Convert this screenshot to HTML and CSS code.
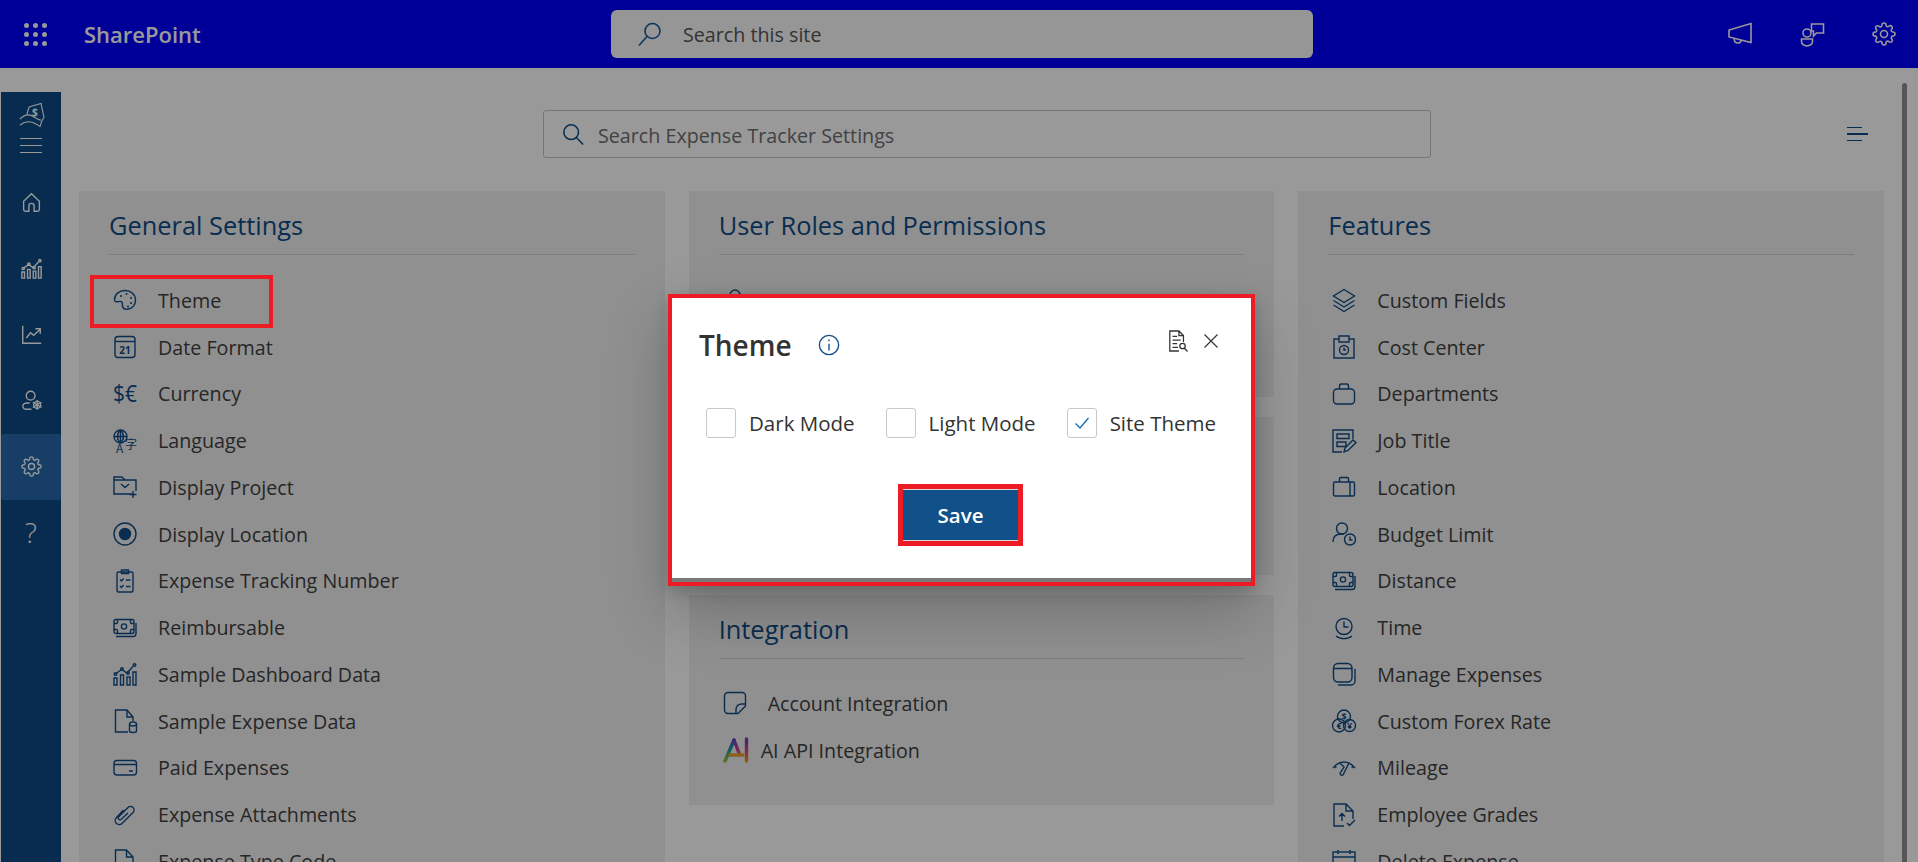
FILE: index.html
```html
<!DOCTYPE html>
<html lang="en">
<head>
    <meta charset="UTF-8">
    <meta name="viewport" content="width=device-width, initial-scale=1.0">
    <title>Expense Tracker Settings</title>
    <link rel="stylesheet" href="styles.css">
</head>
<body>
    <svg class="sprite" width="0" height="0">
        <symbol id="i-money" viewBox="0 0 24 24">
            <rect x="1" y="3.500" width="20" height="14" rx="2"/>
            <circle cx="11" cy="10.500" r="2.600"/>
            <path d="M1 7.500h2.500a1 1 0 0 0 1-1V3.500M21 7.500h-2.500a1 1 0 0 1-1-1V3.500M1 13.500h2.500a1 1 0 0 1 1 1v3M21 13.500h-2.500a1 1 0 0 0-1 1v3M3 20.500h17a3 3 0 0 0 3-3V7"/>
        </symbol>
        <symbol id="i-bars" viewBox="0 0 24 24">
            <path d="M1 16h3v7H1zM7.500 13h3v10h-3zM14 15h3v8h-3zM20 10h3v13h-3z"/>
            <path d="M3 11.500l5.500-4 5.500 3.500 6-6.500"/>
            <circle cx="2.500" cy="12" r="1.300"/><circle cx="9" cy="7" r="1.300"/><circle cx="15" cy="11" r="1.300"/><circle cx="21.500" cy="3" r="1.300"/>
        </symbol>
        <symbol id="i-gear" viewBox="0 0 24 24">
            <circle cx="12" cy="12" r="3.500"/>
            <path d="M19.400 15a1.650 1.650 0 0 0 .33 1.820l.06.06a2 2 0 0 1 0 2.830 2 2 0 0 1-2.830 0l-.06-.06a1.650 1.650 0 0 0-1.820-.33 1.650 1.650 0 0 0-1 1.510V21a2 2 0 0 1-2 2 2 2 0 0 1-2-2v-.09A1.650 1.650 0 0 0 9 19.400a1.650 1.650 0 0 0-1.820.33l-.06.06a2 2 0 0 1-2.830 0 2 2 0 0 1 0-2.830l.06-.06a1.650 1.650 0 0 0 .33-1.820 1.650 1.650 0 0 0-1.510-1H3a2 2 0 0 1-2-2 2 2 0 0 1 2-2h.09A1.650 1.650 0 0 0 4.600 9a1.650 1.650 0 0 0-.33-1.820l-.06-.06a2 2 0 0 1 0-2.830 2 2 0 0 1 2.830 0l.06.06a1.650 1.650 0 0 0 1.820.33H9a1.650 1.650 0 0 0 1-1.510V3a2 2 0 0 1 2-2 2 2 0 0 1 2 2v.09a1.650 1.650 0 0 0 1 1.510 1.650 1.650 0 0 0 1.820-.33l.06-.06a2 2 0 0 1 2.830 0 2 2 0 0 1 0 2.830l-.06.06a1.650 1.650 0 0 0-.33 1.820V9a1.650 1.650 0 0 0 1.510 1H21a2 2 0 0 1 2 2 2 2 0 0 1-2 2h-.09a1.650 1.650 0 0 0-1.510 1z"/>
        </symbol>
        <symbol id="i-doc" viewBox="0 0 24 24">
            <path d="M13 23H2.500V1H13.500L20 8v5M13.500 1v7H20"/>
        </symbol>
    </svg>

    <header class="topbar">
        <div class="waffle"><i></i><i></i><i></i><i></i><i></i><i></i><i></i><i></i><i></i></div>
        <span class="brand">SharePoint</span>
        <div class="site-search">
            <svg class="site-search-ico" viewBox="0 0 24 24"><circle cx="14.500" cy="9" r="7.500"/><path d="M9 14.500L1 23.500"/></svg>
            <span>Search this site</span>
        </div>
        <div class="top-actions">
            <svg viewBox="0 0 24 24"><path d="M23 1.500v19L1 15V8zM6 16.500c.2 3 2 4.500 3.800 4.500 1.700 0 3-1 3.400-2.500"/></svg>
            <svg viewBox="0 0 24 24"><circle cx="7" cy="11" r="4"/><path d="M11.500 2h12v9h-7l-3 3v-5h-2zM1.500 17h11v2.500a5.500 4.500 0 0 1-11 0z"/></svg>
            <svg viewBox="0 0 24 24"><use href="#i-gear"/></svg>
        </div>
    </header>

    <div class="main">
        <nav class="sidebar">
            <div class="side-top">
                <svg class="side-logo" viewBox="0 0 26 24">
                    <path d="M10 4l12-3.500 3 14-2 3M10 4L8 11M1 16c5-5 10-5 14-2 3 2 5 3 7 3M1 22c5-4 11-4 16-1 2 1 3 2 4 2.500l2-6"/>
                    <text x="13" y="13" class="logo-dollar">$</text>
                </svg>
                <div class="burger"><i></i><i></i><i></i></div>
            </div>
            <a class="side-item"><svg viewBox="0 0 24 24"><path d="M3 10.500L12 2l9 8.500V20a2 2 0 0 1-2 2h-4v-6a3 3 0 0 0-6 0v6H5a2 2 0 0 1-2-2z"/></svg></a>
            <a class="side-item"><svg viewBox="0 0 24 24"><use href="#i-bars"/></svg></a>
            <a class="side-item"><svg viewBox="0 0 24 24"><path d="M2 2v20h21M6 16l5-6 3.500 3L22 6M16.500 5.500H22V11"/></svg></a>
            <a class="side-item"><svg viewBox="0 0 24 24"><circle cx="11" cy="6.500" r="5"/><path d="M12 22H5.500a3.500 3.500 0 0 1-2-6.300c1-.7 2-.9 3.500-.9h3"/><circle class="fill" cx="18.500" cy="17" r="4"/><path d="M18.500 11.500v11M13.500 14l10 6M23.500 14l-10 6"/></svg></a>
            <a class="side-item active"><svg viewBox="0 0 24 24"><use href="#i-gear"/></svg></a>
            <a class="side-item help">?</a>
        </nav>

        <div class="content">
            <div class="search-row">
                <div class="settings-search">
                    <svg viewBox="0 0 24 24"><circle cx="10" cy="10" r="8"/><path d="M16 16l7 7.500"/></svg>
                    <span>Search Expense Tracker Settings</span>
                </div>
                <div class="filter-btn"><i></i><i></i><i></i></div>
            </div>

            <div class="cards">
                <section class="card">
                    <h2>General Settings</h2>
                    <ul class="list">
                        <li class="marked">
                            <svg class="ico" viewBox="0 0 24 24"><path d="M12 2.500C6 2.500 1.500 6.500 1.500 11.500c0 2 1.200 2.600 3 2.200 2-.4 3.800-.6 4.500.6.700 1.200.1 2.600.5 4 .5 1.700 2.300 3.300 4.800 3 5-.5 8.200-4.300 8.200-9.300 0-5.600-4.600-9.500-10.500-9.500z"/><circle class="fill" cx="8" cy="8" r="1"/><circle class="fill" cx="13.500" cy="6" r="1"/><circle class="fill" cx="18" cy="10" r="1"/><circle class="fill" cx="18" cy="15" r="1"/><circle class="fill" cx="15" cy="18.500" r="1"/></svg>
                            <span>Theme</span><b class="mark"></b>
                        </li>
                        <li>
                            <svg class="ico" viewBox="0 0 24 24"><rect x="2" y="1.500" width="20" height="21" rx="3"/><path d="M2 6.500h20"/><text x="12" y="18.500" class="ico-num">21</text></svg>
                            <span>Date Format</span>
                        </li>
                        <li>
                            <svg class="ico" viewBox="0 0 24 24"><text x="0" y="20" class="ico-cur" textLength="24" lengthAdjust="spacingAndGlyphs">$€</text></svg>
                            <span>Currency</span>
                        </li>
                        <li>
                            <svg class="ico" viewBox="0 0 24 24"><circle cx="7.500" cy="7.500" r="6.500"/><path d="M1 7.500h13M7.500 1v13M7.500 1c-4 3.500-4 9.500 0 13M7.500 1c4 3.500 4 9.500 0 13"/><text x="3" y="24" class="ico-lang">A</text><text x="12" y="20" class="ico-lang">字</text></svg>
                            <span>Language</span>
                        </li>
                        <li>
                            <svg class="ico" viewBox="0 0 24 24"><path d="M19 19H1V2h8l3 3h11v11M1 5h11M8 9l4 3.500L16 9M20 16v7M16.500 19.500h7"/></svg>
                            <span>Display Project</span>
                        </li>
                        <li>
                            <svg class="ico" viewBox="0 0 24 24"><circle cx="12" cy="12" r="11"/><circle class="solid" cx="12" cy="12" r="5.500"/></svg>
                            <span>Display Location</span>
                        </li>
                        <li>
                            <svg class="ico" viewBox="0 0 24 24"><rect x="4" y="3" width="16" height="20" rx="1.500"/><path d="M8.500 1h7v3.500h-7zM7 10.500l1.500 1.500 2-2.500M13 11h4.500M7 17l1.500 1.500 2-2.500M13 17.500h4.500"/></svg>
                            <span>Expense Tracking Number</span>
                        </li>
                        <li>
                            <svg class="ico"><use href="#i-money"/></svg>
                            <span>Reimbursable</span>
                        </li>
                        <li>
                            <svg class="ico"><use href="#i-bars"/></svg>
                            <span>Sample Dashboard Data</span>
                        </li>
                        <li>
                            <svg class="ico" viewBox="0 0 24 24"><path d="M15 23H2.500V1H14l6 7v4M14 1v7h6"/><ellipse cx="20" cy="15" rx="3.500" ry="2"/><path d="M16.500 15v7a3.500 1.500 0 0 0 7 0v-7"/></svg>
                            <span>Sample Expense Data</span>
                        </li>
                        <li>
                            <svg class="ico" viewBox="0 0 24 24"><rect x="1" y="4.500" width="22.500" height="14.500" rx="3"/><path d="M1 8.500h22.500M16 15h4"/></svg>
                            <span>Paid Expenses</span>
                        </li>
                        <li>
                            <svg class="ico" viewBox="0 0 24 24"><path d="M10.500 7l-7 7.500a4 4 0 0 0 5.500 6L20 9.500a3.500 3.500 0 0 0-5-5L5.500 14a1.800 1.800 0 0 0 2.500 2.500L15 10"/></svg>
                            <span>Expense Attachments</span>
                        </li>
                        <li>
                            <svg class="ico"><use href="#i-doc"/></svg>
                            <span>Expense Type Code</span>
                        </li>
                    </ul>
                </section>

                <div class="stack">
                    <section class="card roles">
                        <h2>User Roles and Permissions</h2>
                        <ul class="list">
                            <li>
                                <svg class="ico" viewBox="0 0 24 24"><circle cx="12" cy="7" r="5"/><path d="M3 22c0-5 4-8 9-8s9 3 9 8"/></svg>
                            </li>
                        </ul>
                    </section>
                    <section class="card hidden-card"></section>
                    <section class="card integration">
                        <h2>Integration</h2>
                        <ul class="list">
                            <li>
                                <svg class="ico" viewBox="0 0 24 24"><path d="M15 22.500H5a3.500 3.500 0 0 1-3.500-3.500V5A3.500 3.500 0 0 1 5 1.500h14A3.500 3.500 0 0 1 22.500 5v10zM22.500 13h-4a5.500 5.500 0 0 0-5.500 5.500v4"/></svg>
                                <span>Account Integration</span>
                            </li>
                            <li class="ai-row">
                                <svg class="ico-ai" viewBox="0 0 26 26">
                                    <defs>
                                        <linearGradient id="ai-a" x1="0" y1="1" x2="1" y2="0"><stop offset="0" stop-color="#8fbf3f"/><stop offset=".5" stop-color="#1f9d8f"/><stop offset="1" stop-color="#2a5fc8"/></linearGradient>
                                        <linearGradient id="ai-b" x1="0" y1="0" x2="0" y2="1"><stop offset="0" stop-color="#6b3fc4"/><stop offset=".5" stop-color="#d0408a"/><stop offset="1" stop-color="#f09020"/></linearGradient>
                                    </defs>
                                    <path class="ai-stroke" stroke="url(#ai-a)" d="M2 24L11 3"/>
                                    <path class="ai-stroke" stroke="url(#ai-b)" d="M11 3l5 13M23.500 2v22"/>
                                    <path class="ai-stroke" stroke="#e8a030" d="M7 18h13"/>
                                </svg>
                                <span>AI API Integration</span>
                            </li>
                        </ul>
                    </section>
                </div>

                <section class="card">
                    <h2>Features</h2>
                    <ul class="list">
                        <li>
                            <svg class="ico" viewBox="0 0 24 24"><path d="M12 1.500l10.500 6.500L12 14.500 1.500 8zM1.500 12.500L12 19l10.500-6.500M1.500 17L12 23.500 22.500 17"/></svg>
                            <span>Custom Fields</span>
                        </li>
                        <li>
                            <svg class="ico" viewBox="0 0 24 24"><path d="M7 4H2v19h20V4h-5M7 1h10v6H7z"/><circle cx="12" cy="15" r="4.500"/><path d="M12 12.500V15h2"/></svg>
                            <span>Cost Center</span>
                        </li>
                        <li>
                            <svg class="ico" viewBox="0 0 24 24"><rect x="1.500" y="7" width="21" height="15" rx="3.500"/><path d="M7.500 7V4a2 2 0 0 1 2-2h5a2 2 0 0 1 2 2v3"/></svg>
                            <span>Departments</span>
                        </li>
                        <li>
                            <svg class="ico" viewBox="0 0 24 24"><path d="M10 23H1V1h20v9M5 5h12v4.500H5zM5 13h9v4.500H5z"/><path d="M12 23l1-4L21 11l3 2.500-8 8z"/></svg>
                            <span>Job Title</span>
                        </li>
                        <li>
                            <svg class="ico" viewBox="0 0 24 24"><rect x="1.500" y="7" width="21" height="14" rx="1.500"/><path d="M7.500 7V4a1.500 1.500 0 0 1 1.500-1.500h6A1.500 1.500 0 0 1 16.500 4v3M18 7v14"/></svg>
                            <span>Location</span>
                        </li>
                        <li>
                            <svg class="ico" viewBox="0 0 24 24"><circle cx="10" cy="6.500" r="5.500"/><path d="M1 20c0-5 3-8 8-8h3"/><circle cx="18" cy="17.500" r="5.500"/><path d="M18 14.500v3.500h2.500"/></svg>
                            <span>Budget Limit</span>
                        </li>
                        <li>
                            <svg class="ico"><use href="#i-money"/></svg>
                            <span>Distance</span>
                        </li>
                        <li>
                            <svg class="ico" viewBox="0 0 24 24"><circle cx="12" cy="10.500" r="8"/><path d="M12 5.500v5.500h4.500M4 20c4 3.500 12 3.500 16 0"/></svg>
                            <span>Time</span>
                        </li>
                        <li>
                            <svg class="ico" viewBox="0 0 24 24"><rect x="1.500" y="1.500" width="18.500" height="18.500" rx="4.500"/><path d="M1.500 6.500H20M23 7v12a4 4 0 0 1-4 4H6"/></svg>
                            <span>Manage Expenses</span>
                        </li>
                        <li>
                            <svg class="ico" viewBox="0 0 24 24"><circle cx="12" cy="7.500" r="6.500"/><circle cx="7" cy="16.500" r="6.500"/><circle cx="17.500" cy="16.500" r="6"/><text x="12" y="11" class="ico-coin">$</text><text x="7" y="20" class="ico-coin">€</text><text x="17.500" y="20" class="ico-coin">¥</text></svg>
                            <span>Custom Forex Rate</span>
                        </li>
                        <li>
                            <svg class="ico" viewBox="0 0 24 24"><path d="M1 12c3-4 6-6 11-6s8 2 11 6M3 9l1 3M21 9l-1 3M17 7l-6 12a2 2 0 0 1-3-1.500L12 11 8 7"/></svg>
                            <span>Mileage</span>
                        </li>
                        <li>
                            <svg class="ico" viewBox="0 0 24 24"><path d="M12 23H2V1h12l7 7v8M14 1v7h7M10 18v-7M7 13.500l3-3 3 3M15 20l2.500 2.500L23 17"/></svg>
                            <span>Employee Grades</span>
                        </li>
                        <li>
                            <svg class="ico" viewBox="0 0 24 24"><rect x="1" y="3" width="22" height="20"/><path d="M1 8h22M6 1v4M18 1v4"/></svg>
                            <span>Delete Expense</span>
                        </li>
                    </ul>
                </section>
            </div>
        </div>

        <div class="scroll-thumb"></div>
    </div>

    <div class="overlay"></div>

    <div class="modal">
        <div class="modal-body">
            <div class="modal-head">
                <h3>Theme</h3>
                <svg class="info-ico" viewBox="0 0 24 24"><circle cx="12" cy="12" r="10.500"/><path d="M12 10.500V18M12 6v2"/></svg>
                <div class="modal-tools">
                    <svg class="doc-ico" viewBox="0 0 22 24"><path d="M12 23H2V1h10l5 5v7M12 1v5h5M5 7h5M5 11h9M5 15h5M5 19h6"/><circle cx="16" cy="17.500" r="3"/><path d="M18 20l3.500 3.500"/></svg>
                    <svg class="close-ico" viewBox="0 0 14 14"><path d="M.5.500l13 13M13.500.500l-13 13"/></svg>
                </div>
            </div>
            <div class="modal-options">
                <label class="option"><span class="check"></span>Dark Mode</label>
                <label class="option"><span class="check"></span>Light Mode</label>
                <label class="option"><span class="check"><svg viewBox="0 0 16 16"><path d="M1.500 8.500l4.500 4.500 8.500-10"/></svg></span>Site Theme</label>
            </div>
            <div class="modal-foot">
                <div class="save-mark"><button class="save-btn">Save</button></div>
            </div>
        </div>
        <div class="modal-edge"></div>
    </div>
</body>
</html>
```

FILE: styles.css
```css
* {
    box-sizing: border-box;
}
html, body {
    margin: 0;
    height: 862px;
    overflow: hidden;
}
body {
    background-color: white;
    font-family: "Open Sans", "Noto Sans", sans-serif;
    color: #404040;
    position: relative;
}
.sprite {
    position: absolute;
}
symbol {
    overflow: visible;
}

/* top bar */
.topbar {
    height: 68px;
    background-color: #0000ff;
    display: flex;
    align-items: center;
    padding-left: 24px;
}
.waffle {
    width: 23px;
    height: 23px;
    display: grid;
    grid-template-columns: repeat(3, 5px);
    grid-template-rows: repeat(3, 5px);
    justify-content: space-between;
    align-content: space-between;
}
.waffle i {
    background-color: white;
    border-radius: 50%;
}
.brand {
    margin-left: 37px;
    width: 174px;
    font-size: 22px;
    font-weight: 600;
    color: white;
}
.site-search {
    margin-left: 353px;
    width: 702px;
    height: 48px;
    background-color: #fbfbfb;
    border-radius: 6px;
    display: flex;
    align-items: center;
    padding-left: 27px;
    font-size: 19.7px;
    color: #555;
}
.site-search-ico {
    width: 24px;
    height: 24px;
    margin-right: 21px;
    fill: none;
    stroke: #115a9c;
    stroke-width: 1.6;
}
.top-actions {
    margin-left: auto;
    margin-right: 22px;
    display: flex;
    gap: 48px;
}
.top-actions svg {
    width: 24px;
    height: 24px;
    fill: none;
    stroke: white;
    stroke-width: 1.6;
    overflow: visible;
}

/* page under the top bar */
.main {
    display: flex;
    height: 794px;
}
.sidebar {
    width: 60px;
    margin: 24px 0 0 1px;
    background-color: #0c4a85;
    flex-shrink: 0;
}
.side-top {
    height: 78px;
    padding-top: 11px;
}
.side-logo {
    display: block;
    width: 26px;
    height: 24px;
    margin-left: 18px;
    fill: none;
    stroke: white;
    stroke-width: 1.1;
    overflow: visible;
}
.logo-dollar {
    font-size: 10px;
    stroke: none;
    fill: white;
    font-weight: 700;
}
.burger {
    width: 22px;
    margin: 11px 0 0 19px;
}
.burger i {
    display: block;
    height: 1px;
    background-color: white;
    margin-bottom: 6px;
}
.side-item {
    display: flex;
    align-items: center;
    justify-content: center;
    height: 66px;
    padding-bottom: 2px;
    color: white;
}
.side-item svg {
    width: 21px;
    height: 21px;
    fill: none;
    stroke: white;
    stroke-width: 1.6;
    overflow: visible;
}
.side-item .fill {
    fill: #0c4a85;
}
.side-item.active {
    background-color: #2568ab;
    border-radius: 3px;
}
.side-item.help {
    font-size: 28px;
    font-weight: 300;
}

.content {
    flex: 1;
    margin: 0 18px;
}
.search-row {
    display: flex;
    align-items: center;
    height: 48px;
    margin-top: 42px;
    margin-bottom: 33px;
    padding-left: 464px;
}
.settings-search {
    width: 888px;
    height: 48px;
    border: 1px solid #c4c4c4;
    border-radius: 3px;
    display: flex;
    align-items: center;
    padding-left: 18px;
    font-size: 19.7px;
    color: #6e6e6e;
}
.settings-search span {
    padding-top: 2px;
}
.settings-search svg {
    width: 22px;
    height: 22px;
    margin-right: 14px;
    fill: none;
    stroke: #0f4c85;
    stroke-width: 1.7;
    overflow: visible;
}
.filter-btn {
    margin-left: auto;
    margin-right: 16px;
    width: 21px;
}
.filter-btn i {
    display: block;
    width: 15px;
    height: 1.5px;
    background-color: #0f4c85;
    margin: 5px 0;
}
.filter-btn i:nth-child(2) {
    width: 21px;
}

.cards {
    display: grid;
    grid-template-columns: repeat(3, 1fr);
    gap: 24px;
    align-items: start;
}
.stack {
    display: flex;
    flex-direction: column;
    gap: 20px;
}
.card {
    background-color: #f0f0f0;
    padding: 0 30px;
}
.roles {
    height: 206px;
}
.hidden-card {
    height: 158px;
}
.integration {
    height: 210px;
}
.integration .list {
    margin-top: 21px;
}
h2 {
    margin: 0;
    padding: 18px 0 13px;
    font-size: 25.4px;
    font-weight: 400;
    line-height: 32px;
    color: #0f4c85;
    border-bottom: 1px solid #d0d0d0;
    height: 64px;
}
.list {
    list-style: none;
    margin: 22px 0 0;
    padding: 0 0 0 4px;
}
.list li {
    display: flex;
    align-items: center;
    height: 46.75px;
    font-size: 19.7px;
    color: #404040;
    position: relative;
}
.ico {
    width: 24px;
    height: 24px;
    margin-right: 21px;
    flex-shrink: 0;
    fill: none;
    stroke: #0f4c85;
    stroke-width: 1.4;
    overflow: visible;
}
.ico .fill {
    fill: #0f4c85;
    stroke: none;
}
.ico .solid {
    fill: #0f4c85;
}
.ico-num {
    font-size: 10px;
    font-weight: 700;
    text-anchor: middle;
    fill: #0f4c85;
    stroke: none;
}
.ico-cur {
    font-size: 24px;
    font-weight: 400;
    fill: #0f4c85;
    stroke: none;
}
.ico-lang {
    font-family: "Noto Sans CJK SC", "Noto Sans", sans-serif;
    font-size: 12px;
    fill: #0f4c85;
    stroke: none;
}
.ico-coin {
    font-size: 9px;
    font-weight: 700;
    text-anchor: middle;
    fill: #0f4c85;
    stroke: none;
}
.ai-row .ico-ai {
    width: 26px;
    height: 26px;
    margin-right: 12px;
    fill: none;
}
.ai-stroke {
    stroke-width: 3.4;
    stroke-linecap: round;
    fill: none;
}
/* red annotation boxes sit above the dimming layer */
.mark {
    position: absolute;
    left: -23px;
    top: -2px;
    width: 183px;
    height: 53px;
    border: 4px solid #ed1c24;
    z-index: 20;
}
.scroll-thumb {
    width: 5px;
    margin: 15px 11px 0 0;
    background-color: #8e8e8e;
    border-radius: 3px 3px 0 0;
}

/* dims the whole page behind the dialog */
.overlay {
    position: absolute;
    inset: 0;
    background-color: rgba(0, 0, 0, 0.4);
    z-index: 10;
}

.modal {
    position: absolute;
    left: 668px;
    top: 294px;
    width: 587px;
    height: 292px;
    border: 4.5px solid #ed1c24;
    background-color: white;
    display: flex;
    flex-direction: column;
    box-shadow: 0 26px 58px rgba(0, 0, 0, 0.22), 0 5px 14px rgba(0, 0, 0, 0.18);
    z-index: 30;
}
.modal-body {
    flex: 1;
    padding: 0 27px;
}
.modal-edge {
    height: 4px;
    background-color: #7a7a7a;
}
.modal-head {
    display: flex;
    align-items: center;
    height: 94px;
}
h3 {
    margin: 0;
    font-size: 28px;
    font-weight: 600;
    color: #333;
}
.info-ico {
    width: 22px;
    height: 22px;
    margin-left: 26px;
    fill: none;
    stroke: #115088;
    stroke-width: 1.5;
}
.modal-tools {
    margin-left: auto;
    margin-right: 6px;
    margin-top: -9px;
    display: flex;
    align-items: center;
    gap: 16px;
}
.doc-ico {
    width: 20px;
    height: 22px;
    fill: none;
    stroke: #333;
    stroke-width: 1.4;
}
.close-ico {
    width: 14px;
    height: 14px;
    fill: none;
    stroke: #333;
    stroke-width: 1.2;
}
.modal-options {
    display: flex;
    padding-left: 7px;
    height: 48px;
    align-items: flex-start;
    margin-top: 16px;
}
.option {
    display: flex;
    flex-shrink: 0;
    align-items: center;
    white-space: nowrap;
    font-size: 20.5px;
    font-weight: 500;
    color: #333;
    margin-right: 31px;
}
.check {
    flex-shrink: 0;
    width: 30px;
    height: 30px;
    border: 1px solid #c8c8c8;
    border-radius: 3px;
    margin-right: 13px;
    display: flex;
    align-items: center;
    justify-content: center;
}
.check svg {
    width: 16px;
    height: 16px;
    fill: none;
    stroke: #1a6fb5;
    stroke-width: 1.4;
}
.modal-foot {
    display: flex;
    justify-content: center;
    margin-top: 27.5px;
}
.save-mark {
    border: 5px solid #ed1c24;
    width: 125px;
    height: 62px;
    margin-left: -2px;
}
.save-btn {
    width: 100%;
    height: 100%;
    display: block;
    border: none;
    border-top: 1px solid #d8d8d8;
    border-bottom: 1px solid #d8d8d8;
    background-color: #115088;
    color: white;
    font-family: inherit;
    font-size: 20.5px;
    font-weight: 600;
}
```
